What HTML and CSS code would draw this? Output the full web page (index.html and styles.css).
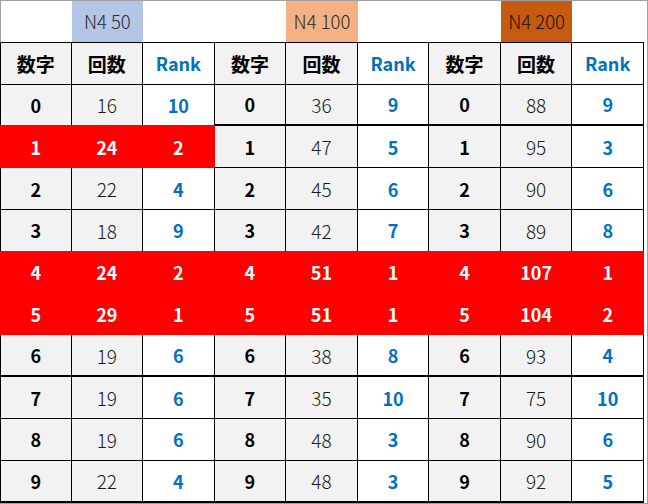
FILE: index.html
```html
<!DOCTYPE html>
<html lang="ja">
<head>
<meta charset="utf-8">
<link rel="stylesheet" href="styles.css">
</head>
<body>
<div class="frame">
<table class="sheet">
  <tr class="top">
    <td></td><td class="h-blue">N4 50</td><td></td>
    <td></td><td class="h-orange">N4 100</td><td></td>
    <td></td><td class="h-brown">N4 200</td><td></td>
  </tr>
  <tr class="cols">
    <td class="d jp">数字</td><td class="c hb jp">回数</td><td class="r">Rank</td>
    <td class="d jp">数字</td><td class="c hb jp">回数</td><td class="r">Rank</td>
    <td class="d jp">数字</td><td class="c hb jp">回数</td><td class="r">Rank</td>
  </tr>
  <tr class="sep-right">
    <td class="d">0</td><td class="c">16</td><td class="r">10</td>
    <td class="d">0</td><td class="c">36</td><td class="r">9</td>
    <td class="d">0</td><td class="c">88</td><td class="r">9</td>
  </tr>
  <tr>
    <td class="d hot">1</td><td class="c hot">24</td><td class="r hot">2</td>
    <td class="d">1</td><td class="c">47</td><td class="r">5</td>
    <td class="d">1</td><td class="c">95</td><td class="r">3</td>
  </tr>
  <tr>
    <td class="d">2</td><td class="c">22</td><td class="r">4</td>
    <td class="d">2</td><td class="c">45</td><td class="r">6</td>
    <td class="d">2</td><td class="c">90</td><td class="r">6</td>
  </tr>
  <tr>
    <td class="d">3</td><td class="c">18</td><td class="r">9</td>
    <td class="d">3</td><td class="c">42</td><td class="r">7</td>
    <td class="d">3</td><td class="c">89</td><td class="r">8</td>
  </tr>
  <tr>
    <td class="d hot">4</td><td class="c hot">24</td><td class="r hot">2</td>
    <td class="d hot">4</td><td class="c hot">51</td><td class="r hot">1</td>
    <td class="d hot">4</td><td class="c hot">107</td><td class="r hot">1</td>
  </tr>
  <tr>
    <td class="d hot">5</td><td class="c hot">29</td><td class="r hot">1</td>
    <td class="d hot">5</td><td class="c hot">51</td><td class="r hot">1</td>
    <td class="d hot">5</td><td class="c hot">104</td><td class="r hot">2</td>
  </tr>
  <tr class="sep">
    <td class="d">6</td><td class="c">19</td><td class="r">6</td>
    <td class="d">6</td><td class="c">38</td><td class="r">8</td>
    <td class="d">6</td><td class="c">93</td><td class="r">4</td>
  </tr>
  <tr>
    <td class="d">7</td><td class="c">19</td><td class="r">6</td>
    <td class="d">7</td><td class="c">35</td><td class="r">10</td>
    <td class="d">7</td><td class="c">75</td><td class="r">10</td>
  </tr>
  <tr>
    <td class="d">8</td><td class="c">19</td><td class="r">6</td>
    <td class="d">8</td><td class="c">48</td><td class="r">3</td>
    <td class="d">8</td><td class="c">90</td><td class="r">6</td>
  </tr>
  <tr class="last">
    <td class="d">9</td><td class="c">22</td><td class="r">4</td>
    <td class="d">9</td><td class="c">48</td><td class="r">3</td>
    <td class="d">9</td><td class="c">92</td><td class="r">5</td>
  </tr>
</table>
</div>
</body>
</html>
```

FILE: styles.css
```css
html, body {
  margin: 0;
  padding: 0;
  background: #ffffff;
}

.frame {
  width: 648px;
  height: 504px;
  box-sizing: border-box;
  border-top: 1px solid #a0a0a0;
  border-right: 1px solid #a0a0a0;
  border-bottom: 1px solid #a0a0a0;
  overflow: hidden;
  background: #ffffff;
}

.sheet {
  width: 644px;
  table-layout: fixed;
  border-collapse: separate;
  border-spacing: 0;
  font-family: "Noto Sans CJK JP", "Noto Sans", sans-serif;
  font-size: 18px;
}

.sheet tr {
  height: 41.8px;
}

.sheet td {
  padding: 0;
  text-align: center;
  vertical-align: middle;
  border-right: 1px solid #000;
  border-bottom: 1px solid #000;
  line-height: 1;
}

.sheet td:first-child {
  border-left: 1px solid #000;
}

.sheet tr.top td {
  border-right: none;
  border-left: none;
  background: #ffffff;
  font-weight: 300;
  font-size: 18.5px;
  color: #2b2b2b;
}

.sheet tr.top td:first-child {
  border-left: 1px solid #a0a0a0;
}

.sheet tr.top .h-blue { background: #b4c6e7; }
.sheet tr.top .h-orange { background: #f4b183; }
.sheet tr.top .h-brown { background: #c55a11; color: #1e120a; }

.d {
  background: #f2f2f2;
  color: #000;
  font-weight: 700;
}

.c {
  background: #f2f2f2;
  color: #1a1a1a;
  font-weight: 300;
  font-size: 19px;
}

.c.hb {
  font-weight: 700;
  color: #000;
}

.jp {
  font-size: 19px;
}

.r {
  background: #ffffff;
  color: #0070c0;
  font-weight: 700;
}

.sheet td.hot {
  background: #ff0000;
  color: #ffffff;
  font-weight: 700;
  font-size: 18px;
  border-color: #ff0000;
  box-shadow: 0 -1px 0 #ff0000;
}

.sheet tr.sep-right td:nth-child(n+4) {
  border-bottom-width: 2px;
}

.sheet tr.sep td,
.sheet tr.last td {
  border-bottom-width: 2px;
}
```
